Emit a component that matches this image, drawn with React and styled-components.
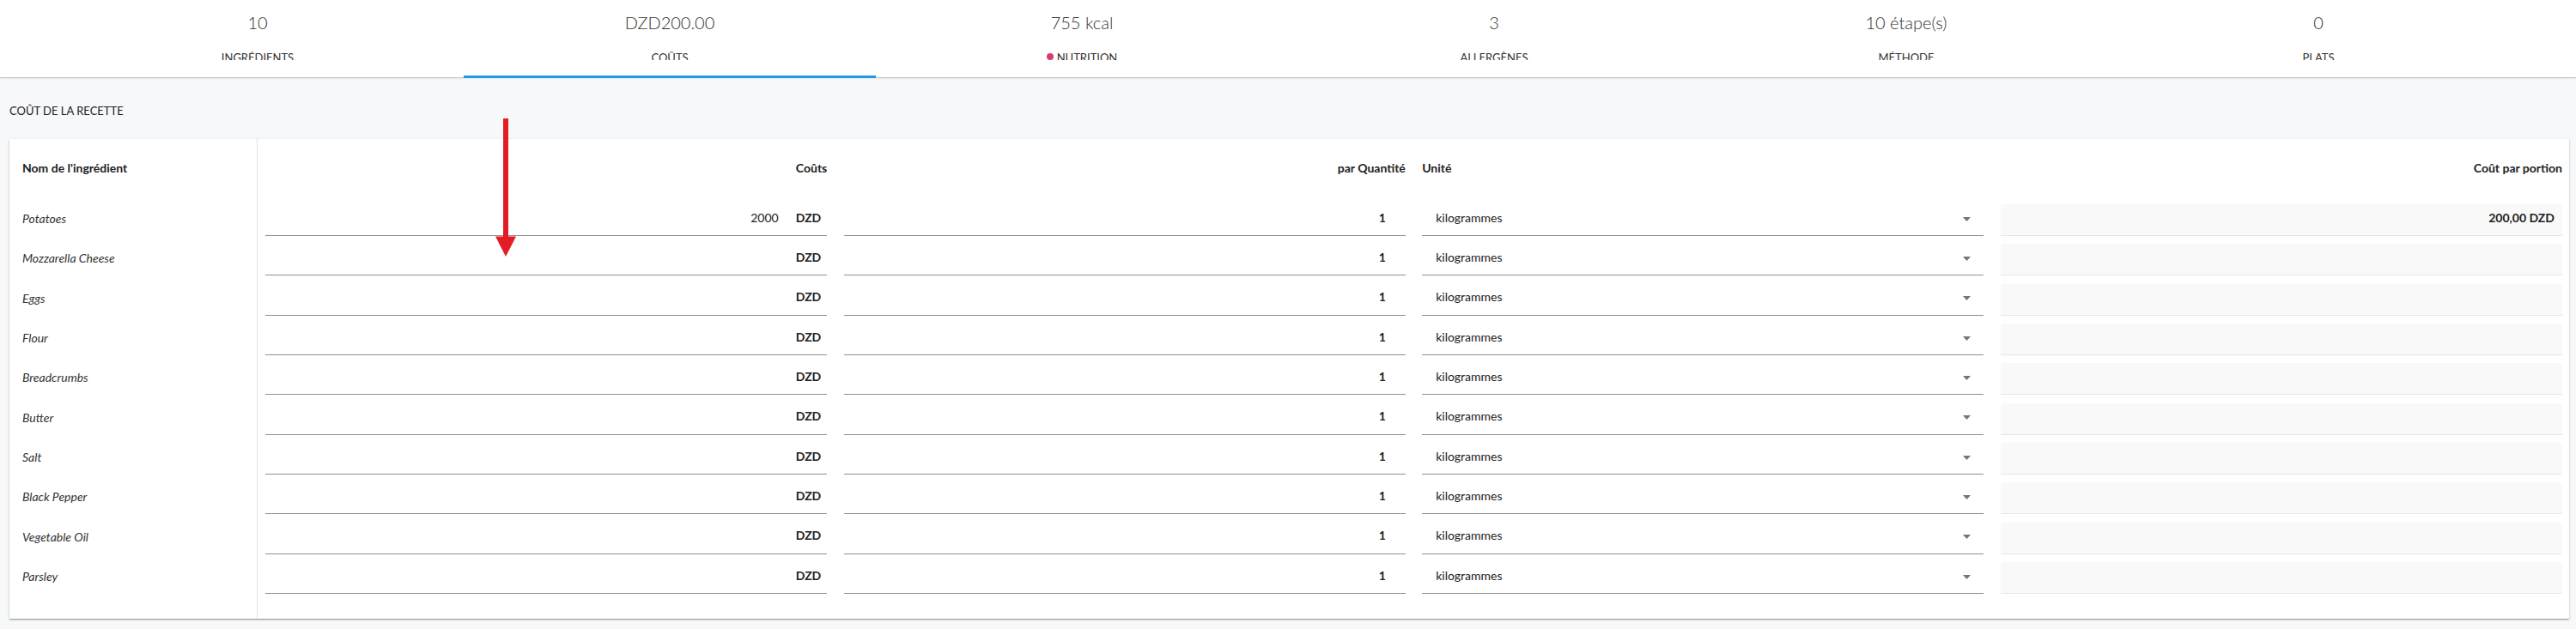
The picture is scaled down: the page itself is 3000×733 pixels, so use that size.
import React from 'react';
import styled, { createGlobalStyle } from 'styled-components';

const GlobalStyle = createGlobalStyle`
  * { box-sizing: border-box; }
  html, body { margin: 0; padding: 0; }
  body {
    background: #f7f8fa;
    font-family: Lato, "Open Sans", "Liberation Sans", sans-serif;
    color: #212121;
    width: 3000px;
    height: 733px;
    overflow: hidden;
  }
`;

const Page = styled.div`
  position: relative;
  width: 3000px;
  height: 733px;
  display: flex;
  flex-direction: column;
`;

const TabBar = styled.nav`
  position: relative;
  z-index: 1;
  height: 91px;
  display: flex;
  padding: 0 60px;
  background: #fff;
  box-shadow: inset 0 -1px 0 #c4c4c4, 0 1px 2px rgba(0, 0, 0, 0.07);
`;

const Tab = styled.div`
  flex: 1;
  display: flex;
  flex-direction: column;
  align-items: center;
  padding-top: 13.5px;
  border-bottom: 3px solid ${(p) => (p.$active ? '#1a9be6' : 'transparent')};
`;

const TabValue = styled.div`
  font-size: 20px;
  font-weight: 300;
  line-height: 24px;
  color: #333;
  white-space: nowrap;
`;

const TabLabel = styled.div`
  margin-top: 22px;
  height: 10.5px;
  overflow: hidden;
  display: flex;
  align-items: flex-start;
  gap: 4px;
  font-size: 13px;
  line-height: 15.6px;
  text-transform: uppercase;
  color: #333;
`;

const Dot = styled.span`
  width: 8px;
  height: 8px;
  margin-top: 2.2px;
  border-radius: 50%;
  background: #d23f6b;
`;

const Content = styled.main`
  flex: 1;
  display: flex;
  flex-direction: column;
  padding: 31px 8px 0 11px;
`;

const SectionTitle = styled.h2`
  margin: 0;
  font-size: 13px;
  font-weight: 400;
  line-height: 15.6px;
  text-transform: uppercase;
  color: #212121;
`;

const Card = styled.section`
  margin-top: 24.2px;
  height: 559px;
  display: grid;
  grid-template-columns: 289px 1fr;
  background: #fff;
  box-shadow: 0 1px 3px rgba(0, 0, 0, 0.2), 0 1px 1px rgba(0, 0, 0, 0.14),
    0 2px 1px -1px rgba(0, 0, 0, 0.12);
`;

const NamePane = styled.div`
  display: flex;
  flex-direction: column;
  border-right: 1px solid #e3e3e3;
  padding-left: 15px;
`;

const GridPane = styled.div`
  display: flex;
  flex-direction: column;
  padding: 0 8px 0 9px;
`;

const HeaderCell = styled.div`
  height: 67px;
  padding-top: 26.2px;
  font-size: 14px;
  font-weight: 700;
  line-height: 16.8px;
  color: #212121;
  text-align: ${(p) => p.$align || 'left'};
  white-space: nowrap;
`;

const NameRow = styled.div`
  height: 46.33px;
  display: flex;
  align-items: flex-end;
  padding-bottom: 11.3px;
  font-size: 14px;
  font-style: italic;
  line-height: 16.8px;
  color: #333;
`;

const HeaderRow = styled.div`
  display: grid;
  grid-template-columns: repeat(4, 1fr);
  column-gap: 19.33px;
`;

const DataRow = styled.div`
  height: 46.33px;
  display: grid;
  grid-template-columns: repeat(4, 1fr);
  column-gap: 19.33px;
  padding-top: 9.33px;
`;

const Field = styled.div`
  height: 37px;
  display: flex;
  align-items: flex-start;
  justify-content: ${(p) => p.$justify || 'flex-end'};
  padding: 7.5px ${(p) => p.$pr || 0}px 0 ${(p) => p.$pl || 0}px;
  border-bottom: 1px solid #919191;
  font-size: 14px;
  line-height: 16.8px;
  color: #212121;
`;

const FilledField = styled(Field)`
  background: #f9f9f9;
  border-radius: 4px 4px 0 0;
  border-bottom-color: #e6e6e6;
  padding-right: 9px;
  font-weight: 700;
`;

const Value = styled.span`
  font-weight: ${(p) => (p.$bold ? 700 : 400)};
`;

const Adornment = styled.span`
  margin-left: 20px;
  font-weight: 700;
`;

const UnitText = styled.span`
  flex: 1;
`;

const Caret = styled.svg`
  width: 9px;
  height: 5px;
  margin-top: 7px;
`;

const ArrowOverlay = styled.svg`
  position: absolute;
  left: 577px;
  top: 138px;
  width: 24px;
  height: 161px;
  z-index: 2;
`;

const tabs = [
  { value: '10', label: 'Ingrédients' },
  { value: 'DZD200.00', label: 'Coûts', active: true },
  { value: '755 kcal', label: 'Nutrition', dot: true },
  { value: '3', label: 'Allergènes' },
  { value: '10 étape(s)', label: 'Méthode' },
  { value: '0', label: 'Plats' },
];

const ingredients = [
  { name: 'Potatoes', cost: '2000', portion: '200,00 DZD' },
  { name: 'Mozzarella Cheese' },
  { name: 'Eggs' },
  { name: 'Flour' },
  { name: 'Breadcrumbs' },
  { name: 'Butter' },
  { name: 'Salt' },
  { name: 'Black Pepper' },
  { name: 'Vegetable Oil' },
  { name: 'Parsley' },
];

export default function App() {
  return (
    <Page>
      <GlobalStyle />
      <TabBar>
        {tabs.map((t) => (
          <Tab key={t.label} $active={t.active}>
            <TabValue>{t.value}</TabValue>
            <TabLabel>
              {t.dot && <Dot />}
              <span>{t.label}</span>
            </TabLabel>
          </Tab>
        ))}
      </TabBar>
      <Content>
        <SectionTitle>Coût de la recette</SectionTitle>
        <Card>
          <NamePane>
            <HeaderCell>Nom de l'ingrédient</HeaderCell>
            {ingredients.map((i) => (
              <NameRow key={i.name}>{i.name}</NameRow>
            ))}
          </NamePane>
          <GridPane>
            <HeaderRow>
              <HeaderCell $align="right">Coûts</HeaderCell>
              <HeaderCell $align="right">par Quantité</HeaderCell>
              <HeaderCell>Unité</HeaderCell>
              <HeaderCell $align="right">Coût par portion</HeaderCell>
            </HeaderRow>
            {ingredients.map((i) => (
              <DataRow key={i.name}>
                <Field $pr={7}>
                  {i.cost && <Value>{i.cost}</Value>}
                  <Adornment>DZD</Adornment>
                </Field>
                <Field $pr={23}>
                  <Value $bold>1</Value>
                </Field>
                <Field $justify="flex-start" $pl={16} $pr={15}>
                  <UnitText>kilogrammes</UnitText>
                  <Caret viewBox="0 0 9 5">
                    <polygon points="0,0 9,0 4.5,5" fill="#757575" />
                  </Caret>
                </Field>
                <FilledField>{i.portion || ''}</FilledField>
              </DataRow>
            ))}
          </GridPane>
        </Card>
      </Content>
      <ArrowOverlay viewBox="0 0 24 161">
        <rect x="9" y="0" width="6" height="140" fill="#e21d24" />
        <polygon points="0,137.5 24,137.5 12,161" fill="#e21d24" />
      </ArrowOverlay>
    </Page>
  );
}
